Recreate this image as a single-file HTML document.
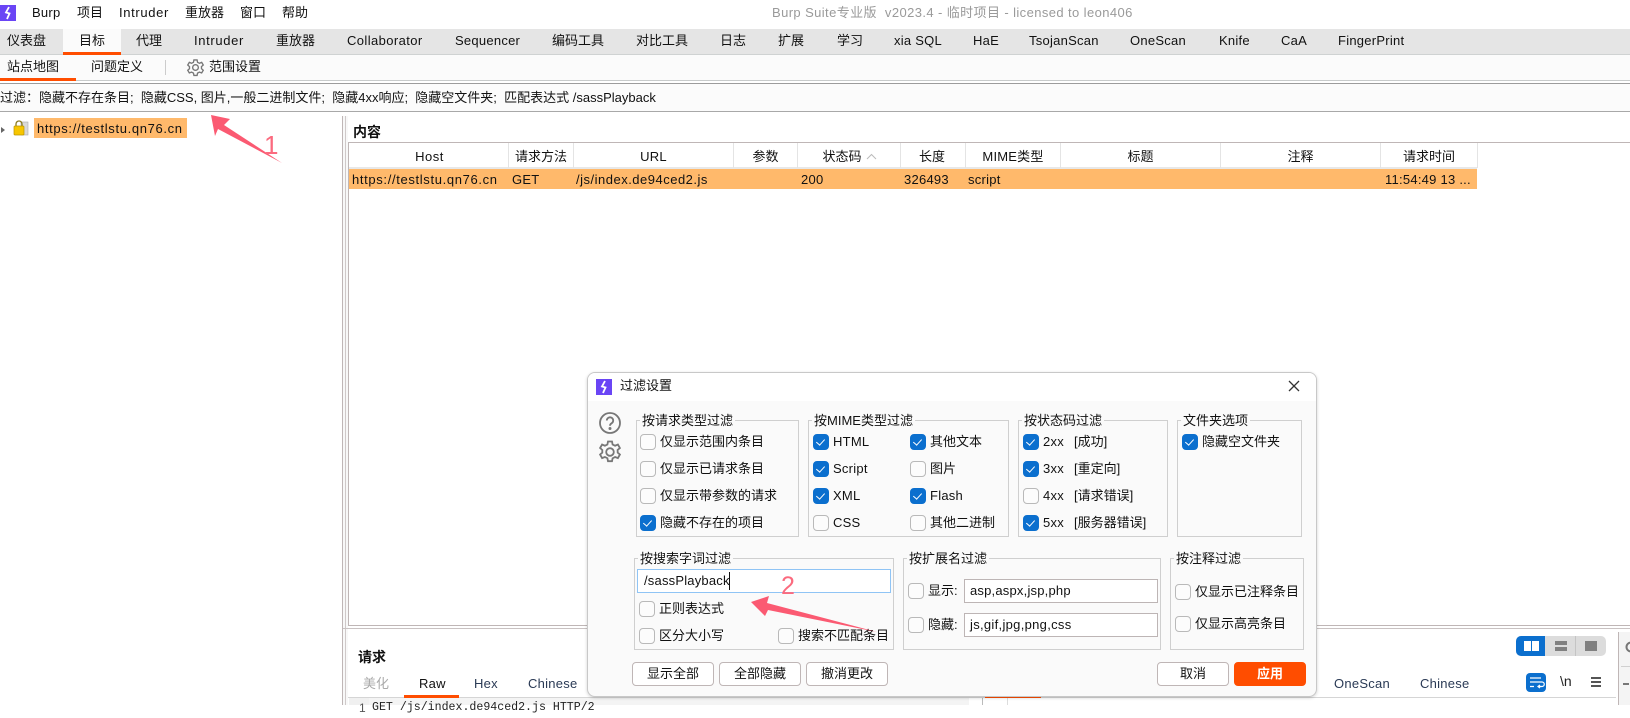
<!DOCTYPE html>
<html lang="zh"><head><meta charset="utf-8"><title>Burp Suite</title>
<style>
html,body{margin:0;padding:0}
body{width:1630px;height:705px;position:relative;overflow:hidden;background:#fff;font:13px/20px "Liberation Sans","Noto Sans CJK SC",sans-serif;color:#111}
.t{position:absolute;white-space:pre;height:20px;line-height:20px}
.b{position:absolute}
.l{letter-spacing:.25px}
.w{letter-spacing:.65px}
.c{position:absolute;width:16px;height:16px;box-sizing:border-box;border:1.3px solid #b9b9b9;border-radius:4px;background:#fcfcfc}
.k{background:#0b6fce;border-color:#0b6fce}
.k:after{content:"";position:absolute;left:4.4px;top:1.6px;width:3.6px;height:7.2px;border:solid #fff;border-width:0 1.8px 1.8px 0;transform:rotate(42deg)}
.g{position:absolute;box-sizing:border-box;border:1px solid #cfcfcf}
.g>i{position:absolute;top:-10px;left:3px;height:20px;line-height:20px;background:#fafafa;padding:0 2px;font-style:normal;white-space:pre}
.btn{position:absolute;box-sizing:border-box;height:24px;line-height:22px;text-align:center;border:1px solid #bfb6b6;border-radius:4px;background:#fff}
.in{position:absolute;box-sizing:border-box;height:24px;line-height:22px;border:1px solid #bdb5b5;background:#fff;padding-left:5px;letter-spacing:.2px}
.th{position:absolute;top:147px;height:20px;line-height:20px;text-align:center;white-space:pre}
.vl{position:absolute;top:143px;width:1px;height:25px;background:#e4e4e4}
</style></head><body>

<!-- title bar -->
<svg class="b" style="left:0;top:5px" width="16" height="16" viewBox="0 0 16 16"><rect width="16" height="16" fill="#6a45f5"/><path d="M9 2 L6 7.5 L9.5 8.5 L7 14" fill="none" stroke="#fff" stroke-width="1.8"/></svg>
<span class="t l" style="left:32px;top:3px">Burp</span>
<span class="t" style="left:77px;top:3px">项目</span>
<span class="t w" style="left:119px;top:3px">Intruder</span>
<span class="t" style="left:185px;top:3px">重放器</span>
<span class="t" style="left:240px;top:3px">窗口</span>
<span class="t" style="left:282px;top:3px">帮助</span>
<span class="t" style="left:772px;top:3px;color:#9a9a9a;letter-spacing:.4px">Burp Suite专业版  v2023.4 - 临时项目 - licensed to leon406</span>

<!-- main tabs -->
<div class="b" style="left:0;top:29px;width:1630px;height:25px;background:#e5e5e5;border-bottom:1px solid #cfd2d2"></div>
<div class="b" style="left:63px;top:29px;width:58px;height:23px;background:#fbfbfb"></div>
<div class="b" style="left:63px;top:52px;width:58px;height:2.5px;background:#ff4d00"></div>
<span class="t" style="left:7px;top:31px">仪表盘</span>
<span class="t" style="left:79px;top:31px">目标</span>
<span class="t" style="left:136px;top:31px">代理</span>
<span class="t w" style="left:194px;top:31px">Intruder</span>
<span class="t" style="left:276px;top:31px">重放器</span>
<span class="t" style="left:347px;top:31px;letter-spacing:.4px">Collaborator</span>
<span class="t l" style="left:455px;top:31px">Sequencer</span>
<span class="t" style="left:552px;top:31px">编码工具</span>
<span class="t" style="left:636px;top:31px">对比工具</span>
<span class="t" style="left:720px;top:31px">日志</span>
<span class="t" style="left:778px;top:31px">扩展</span>
<span class="t" style="left:837px;top:31px">学习</span>
<span class="t l" style="left:894px;top:31px">xia SQL</span>
<span class="t l" style="left:973px;top:31px">HaE</span>
<span class="t l" style="left:1029px;top:31px">TsojanScan</span>
<span class="t l" style="left:1130px;top:31px">OneScan</span>
<span class="t l" style="left:1219px;top:31px">Knife</span>
<span class="t l" style="left:1281px;top:31px">CaA</span>
<span class="t l" style="left:1338px;top:31px">FingerPrint</span>

<!-- sub tabs -->
<div class="b" style="left:0;top:55px;width:1630px;height:25px;background:#fbfbfb;border-bottom:1px solid #c8cbcb"></div>
<div class="b" style="left:0;top:78px;width:76px;height:2.5px;background:#ff4d00"></div>
<span class="t" style="left:7px;top:57px">站点地图</span>
<span class="t" style="left:91px;top:57px">问题定义</span>
<div class="b" style="left:165px;top:60px;width:1px;height:15px;background:#ccc"></div>
<svg class="b" style="left:186px;top:58px" width="19" height="19" viewBox="0 0 24 24" fill="none" stroke="#777" stroke-width="1.7"><circle cx="12" cy="12" r="3.6"/><path d="M10 2.5h4l.6 3 2.4 1.2 2.8-1.2 2 3.4-2.3 2 .1 2.6 2.2 2-2 3.4-2.8-1.1-2.4 1.3-.6 2.9h-4l-.6-3-2.4-1.2-2.8 1.1-2-3.4 2.2-2v-2.6l-2.2-2 2-3.4 2.8 1.2 2.4-1.2z"/></svg>
<span class="t" style="left:209px;top:57px">范围设置</span>

<!-- filter bar -->
<div class="b" style="left:0;top:83px;width:1630px;height:29px;box-sizing:border-box;background:#fbfbfb;border-top:1px solid #9c9c9c;border-bottom:1px solid #a8a8a8"></div>
<span class="t" style="left:0;top:88px">过滤：隐藏不存在条目;  隐藏CSS, 图片,一般二进制文件;  隐藏4xx响应;  隐藏空文件夹;  匹配表达式 /sassPlayback</span>

<!-- left panel -->
<div class="b" style="left:342px;top:116px;width:1px;height:589px;background:#bfb6b6"></div>
<div class="b" style="left:343px;top:116px;width:5px;height:589px;background:#f8f8f8"></div>
<div class="b" style="left:345px;top:116px;width:1px;height:589px;background:#cfc9c9"></div>
<div class="b" style="left:1px;top:127px;width:0;height:0;border-left:4px solid #666;border-top:3px solid transparent;border-bottom:3px solid transparent"></div>
<svg class="b" style="left:12px;top:120px" width="18" height="16" viewBox="0 0 18 16"><rect x="9" y="2" width="7" height="13" fill="#d9d9d9" stroke="#aaa" stroke-width=".6"/><path d="M4 7V4a3 3 0 0 1 6 0v3" fill="none" stroke="#8a7a20" stroke-width="1.3"/><rect x="2" y="6" width="10" height="9" rx="1" fill="#f7c600" stroke="#b99400" stroke-width=".7"/></svg>
<div class="b" style="left:34px;top:118px;width:153px;height:20px;background:#ffb96b"></div>
<span class="t w" style="left:37px;top:119px">https://testlstu.qn76.cn</span>

<!-- content -->
<span class="t" style="left:353px;top:122px;font-weight:bold;font-size:14px">内容</span>
<div class="b" style="left:348px;top:142px;width:1282px;height:1px;background:#bfb6b6"></div>
<div class="b" style="left:348px;top:142px;width:1px;height:484px;background:#bfb6b6"></div>
<div class="b" style="left:348px;top:625px;width:1282px;height:1px;background:#bfb6b6"></div>
<div class="b" style="left:343px;top:628px;width:1287px;height:1px;background:#c9c2c2"></div>
<div class="b" style="left:349px;top:167px;width:1128px;height:2px;background:#e8e8e8"></div>
<div class="vl" style="left:508px"></div><div class="vl" style="left:573px"></div><div class="vl" style="left:733px"></div><div class="vl" style="left:797px"></div><div class="vl" style="left:900px"></div><div class="vl" style="left:965px"></div><div class="vl" style="left:1060px"></div><div class="vl" style="left:1220px"></div><div class="vl" style="left:1380px"></div><div class="vl" style="left:1477px"></div>
<span class="th" style="left:350px;width:159px;letter-spacing:.5px">Host</span>
<span class="th" style="left:509px;width:64px">请求方法</span>
<span class="th l" style="left:574px;width:159px">URL</span>
<span class="th" style="left:734px;width:63px">参数</span>
<span class="th" style="left:797px;width:90px">状态码</span>
<svg class="b" style="left:866px;top:153px" width="11" height="7" viewBox="0 0 11 7"><path d="M1 6L5.5 1.500 10 6" fill="none" stroke="#bbb" stroke-width="1"/></svg>
<span class="th" style="left:900px;width:64px">长度</span>
<span class="th" style="left:966px;width:94px;letter-spacing:.2px">MIME类型</span>
<span class="th" style="left:1061px;width:159px">标题</span>
<span class="th" style="left:1221px;width:159px">注释</span>
<span class="th" style="left:1381px;width:96px">请求时间</span>

<div class="b" style="left:349px;top:169px;width:1128px;height:20px;background:#ffb96b"></div>
<span class="t w" style="left:352px;top:170px">https://testlstu.qn76.cn</span>
<span class="t l" style="left:512px;top:170px">GET</span>
<span class="t" style="left:576px;top:170px;letter-spacing:.5px">/js/index.de94ced2.js</span>
<span class="t l" style="left:801px;top:170px">200</span>
<span class="t l" style="left:904px;top:170px">326493</span>
<span class="t l" style="left:968px;top:170px">script</span>
<span class="t l" style="left:1385px;top:170px">11:54:49 13 ...</span>

<!-- request pane -->
<span class="t" style="left:358px;top:647px;font-weight:bold;font-size:14px">请求</span>
<span class="t" style="left:363px;top:674px;color:#aaa">美化</span>
<span class="t l" style="left:419px;top:674px">Raw</span>
<span class="t l" style="left:474px;top:674px;color:#2a3a55">Hex</span>
<span class="t l" style="left:528px;top:674px;color:#2a3a55">Chinese</span>
<div class="b" style="left:348px;top:697px;width:1268px;height:1px;background:#d5d5d5"></div>
<div class="b" style="left:404px;top:695px;width:55px;height:2.5px;background:#ff4d00"></div>
<div class="b" style="left:349px;top:698px;width:20px;height:7px;background:#f0f0f0"></div>
<div class="b" style="left:369px;top:698px;width:600px;height:7px;background:#f4f4f4"></div>
<span class="t" style="left:359px;top:698px;font-size:12px;color:#555">1</span>
<span class="t" style="left:372px;top:698px;font:11.6px/20px 'Liberation Mono',monospace;color:#222">GET /js/index.de94ced2.js HTTP/2</span>

<!-- response pane -->
<div class="b" style="left:982px;top:698px;width:1px;height:7px;background:#bbb"></div>
<div class="b" style="left:1007px;top:698px;width:1px;height:7px;background:#ddd"></div>
<div class="b" style="left:985px;top:696px;width:56px;height:2px;background:#ff4d00"></div>
<span class="t l" style="left:1334px;top:674px;color:#2a3a55">OneScan</span>
<span class="t l" style="left:1420px;top:674px;color:#2a3a55">Chinese</span>
<div class="b" style="left:1516px;top:636px;width:90px;height:20px;background:#dcdcdc;border-radius:5px"></div>
<div class="b" style="left:1516px;top:636px;width:29px;height:20px;background:#0b6fce;border-radius:5px 0 0 5px"></div>
<div class="b" style="left:1524px;top:641px;width:6.5px;height:10px;background:#fff"></div>
<div class="b" style="left:1532px;top:641px;width:6.5px;height:10px;background:#fff"></div>
<div class="b" style="left:1555px;top:641px;width:12px;height:4px;background:#808080"></div>
<div class="b" style="left:1555px;top:647px;width:12px;height:4px;background:#808080"></div>
<div class="b" style="left:1575px;top:636px;width:1px;height:20px;background:#c4c4c4"></div>
<div class="b" style="left:1585px;top:641px;width:12px;height:10px;background:#808080"></div>
<svg class="b" style="left:1526px;top:673px" width="20" height="19" viewBox="0 0 20 19"><rect width="20" height="19" rx="4" fill="#0b6fce"/><path d="M4 5h11M4 9h12a1.8 1.8 0 0 1 0 4.500h-3M4 13.500h4M14 12l-2 1.500 2 1.500" fill="none" stroke="#fff" stroke-width="1.2"/></svg>
<span class="t" style="left:1560px;top:671px;font-size:14px;color:#222">\n</span>
<div class="b" style="left:1591px;top:677px;width:10px;height:2px;background:#555"></div>
<div class="b" style="left:1591px;top:681px;width:10px;height:2px;background:#555"></div>
<div class="b" style="left:1591px;top:685px;width:10px;height:2px;background:#555"></div>
<div class="b" style="left:1618px;top:632px;width:1px;height:73px;background:#bfb6b6"></div>
<div class="b" style="left:1619px;top:632px;width:11px;height:73px;background:#f4f4f4"></div>
<div class="b" style="left:1621px;top:666px;width:9px;height:1px;background:#d0d0d0"></div>
<svg class="b" style="left:1624px;top:640px" width="6" height="14" viewBox="0 0 6 14"><circle cx="7" cy="7" r="4.5" fill="none" stroke="#777" stroke-width="2"/></svg>
<div class="b" style="left:1623px;top:683px;width:6px;height:1.5px;background:#777"></div>

<!-- dialog -->
<div class="b" style="left:587px;top:372px;width:730px;height:325px;box-sizing:border-box;background:#fafafa;border:1px solid #c8c8c8;border-radius:8px;box-shadow:0 1px 3px rgba(0,0,0,.18)"></div>
<div class="b" style="left:588px;top:373px;width:728px;height:28px;background:#fff;border-radius:7px 7px 0 0"></div>
<svg class="b" style="left:596px;top:379px" width="16" height="16" viewBox="0 0 16 16"><rect width="16" height="16" fill="#6a45f5"/><path d="M9 2 L6 7.5 L9.5 8.5 L7 14" fill="none" stroke="#fff" stroke-width="1.8"/></svg>
<span class="t" style="left:620px;top:376px">过滤设置</span>
<svg class="b" style="left:1288px;top:380px" width="12" height="12" viewBox="0 0 12 12"><path d="M1 1L11 11M11 1L1 11" stroke="#333" stroke-width="1.3"/></svg>

<svg class="b" style="left:598px;top:411px" width="24" height="24" viewBox="0 0 24 24" fill="none" stroke="#777" stroke-width="1.8"><circle cx="12" cy="12" r="10"/><path d="M8.800 9.500a3.200 3.200 0 1 1 4.800 2.800c-1 .6-1.600 1.200-1.600 2.400"/><circle cx="12" cy="17.500" r=".6" fill="#777"/></svg>
<svg class="b" style="left:598px;top:440px" width="24" height="24" viewBox="0 0 24 24" fill="none" stroke="#777" stroke-width="1.8"><circle cx="12" cy="12" r="3.8"/><path d="M10 1.500h4l.6 3 2.500 1.200 2.800-1.200 2 3.500-2.300 2 .1 2.600 2.200 2-2 3.500-2.800-1.100-2.500 1.300-.6 2.900h-4l-.6-3-2.500-1.200-2.800 1.100-2-3.500 2.200-2v-2.600l-2.200-2 2-3.500 2.800 1.200 2.500-1.200z"/></svg>

<div class="g" style="left:636px;top:420px;width:163px;height:117px"><i>按请求类型过滤</i></div>
<span class="c" style="left:640px;top:434px"></span><span class="t" style="left:660px;top:432px">仅显示范围内条目</span>
<span class="c" style="left:640px;top:461px"></span><span class="t" style="left:660px;top:459px">仅显示已请求条目</span>
<span class="c" style="left:640px;top:488px"></span><span class="t" style="left:660px;top:486px">仅显示带参数的请求</span>
<span class="c k" style="left:640px;top:515px"></span><span class="t" style="left:660px;top:513px">隐藏不存在的项目</span>

<div class="g" style="left:808px;top:420px;width:201px;height:117px"><i>按MIME类型过滤</i></div>
<span class="c k" style="left:813px;top:434px"></span><span class="t l" style="left:833px;top:432px">HTML</span>
<span class="c k" style="left:813px;top:461px"></span><span class="t l" style="left:833px;top:459px">Script</span>
<span class="c k" style="left:813px;top:488px"></span><span class="t l" style="left:833px;top:486px">XML</span>
<span class="c" style="left:813px;top:515px"></span><span class="t l" style="left:833px;top:513px">CSS</span>
<span class="c k" style="left:910px;top:434px"></span><span class="t" style="left:930px;top:432px">其他文本</span>
<span class="c" style="left:910px;top:461px"></span><span class="t" style="left:930px;top:459px">图片</span>
<span class="c k" style="left:910px;top:488px"></span><span class="t l" style="left:930px;top:486px">Flash</span>
<span class="c" style="left:910px;top:515px"></span><span class="t" style="left:930px;top:513px">其他二进制</span>

<div class="g" style="left:1018px;top:420px;width:150px;height:117px"><i>按状态码过滤</i></div>
<span class="c k" style="left:1023px;top:434px"></span><span class="t l" style="left:1043px;top:432px">2xx</span><span class="t" style="left:1074px;top:432px">[成功]</span>
<span class="c k" style="left:1023px;top:461px"></span><span class="t l" style="left:1043px;top:459px">3xx</span><span class="t" style="left:1074px;top:459px">[重定向]</span>
<span class="c" style="left:1023px;top:488px"></span><span class="t l" style="left:1043px;top:486px">4xx</span><span class="t" style="left:1074px;top:486px">[请求错误]</span>
<span class="c k" style="left:1023px;top:515px"></span><span class="t l" style="left:1043px;top:513px">5xx</span><span class="t" style="left:1074px;top:513px">[服务器错误]</span>

<div class="g" style="left:1177px;top:420px;width:125px;height:117px"><i>文件夹选项</i></div>
<span class="c k" style="left:1182px;top:434px"></span><span class="t" style="left:1202px;top:432px">隐藏空文件夹</span>

<div class="g" style="left:634px;top:558px;width:260px;height:92px"><i>按搜索字词过滤</i></div>
<div class="in" style="left:637px;top:569px;width:254px;border:1.5px solid #8fc4f5;padding-left:6px;line-height:21px">/sassPlayback</div>
<div class="b" style="left:729px;top:572px;width:1px;height:18px;background:#111"></div>
<span class="c" style="left:639px;top:601px"></span><span class="t" style="left:659px;top:599px">正则表达式</span>
<span class="c" style="left:639px;top:628px"></span><span class="t" style="left:659px;top:626px">区分大小写</span>
<span class="c" style="left:778px;top:628px"></span><span class="t" style="left:798px;top:626px">搜索不匹配条目</span>

<div class="g" style="left:903px;top:558px;width:258px;height:92px"><i>按扩展名过滤</i></div>
<span class="c" style="left:908px;top:583px"></span><span class="t" style="left:928px;top:581px">显示:</span>
<div class="in" style="left:964px;top:579px;width:194px">asp,aspx,jsp,php</div>
<span class="c" style="left:908px;top:617px"></span><span class="t" style="left:928px;top:615px">隐藏:</span>
<div class="in" style="left:964px;top:613px;width:194px;letter-spacing:.3px">js,gif,jpg,png,css</div>

<div class="g" style="left:1170px;top:558px;width:134px;height:92px"><i>按注释过滤</i></div>
<span class="c" style="left:1175px;top:584px"></span><span class="t" style="left:1195px;top:582px">仅显示已注释条目</span>
<span class="c" style="left:1175px;top:616px"></span><span class="t" style="left:1195px;top:614px">仅显示高亮条目</span>

<div class="btn" style="left:632px;top:662px;width:82px">显示全部</div>
<div class="btn" style="left:719px;top:662px;width:82px">全部隐藏</div>
<div class="btn" style="left:806px;top:662px;width:82px">撤消更改</div>
<div class="btn" style="left:1157px;top:662px;width:72px">取消</div>
<div class="btn" style="left:1234px;top:662px;width:72px;background:#ff4d00;border-color:#ff4d00;color:#fff;font-weight:bold">应用</div>

<!-- annotations -->
<svg class="b" style="left:0;top:0" width="1630" height="705" viewBox="0 0 1630 705"><polygon points="211,115 230,119 224,125 282,163 218,129 215,136" fill="#fb5a72"/><polygon points="751,602 769,596 767,603 877,632 768,610 765,616" fill="#fb5a72"/></svg>
<span class="t" style="left:264px;top:133px;height:24px;line-height:24px;font-size:26px;color:#fb6a7e">1</span>
<span class="t" style="left:781px;top:574px;height:24px;line-height:24px;font-size:25px;color:#fb6a7e">2</span>
</body></html>
